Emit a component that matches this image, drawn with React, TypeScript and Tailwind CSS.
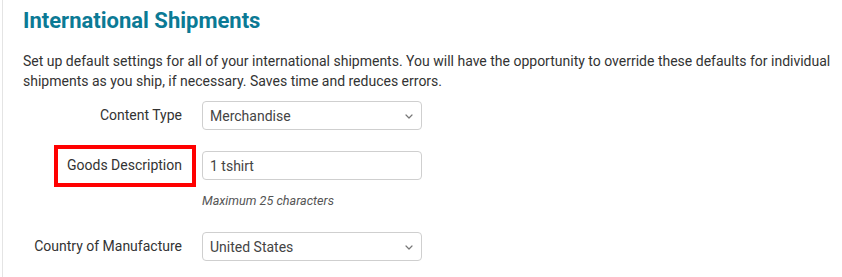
import type { ReactNode } from "react";

function FieldRow({ label, children, highlight }: { label: string; children: ReactNode; highlight?: boolean }) {
  return (
    <div className="flex items-center gap-[20px]">
      <div className="flex w-[159px] shrink-0 justify-end">
        <span className="relative text-[14px] text-[#333]">
          {label}
          {highlight && (
            <span className="pointer-events-none absolute -bottom-[11px] -left-[13px] -right-[14px] -top-[10px] border-[4px] border-[#ff0000]" />
          )}
        </span>
      </div>
      {children}
    </div>
  );
}

function Chevron() {
  return (
    <svg width="8" height="5" viewBox="0 0 8 5" fill="none" className="text-[#777]">
      <path d="M1 1l3 3 3-3" stroke="currentColor" strokeWidth="1.2" strokeLinecap="round" strokeLinejoin="round" />
    </svg>
  );
}

function SelectBox({ value }: { value: string }) {
  return (
    <div className="flex h-[29px] w-[220px] items-center justify-between rounded-[4px] border border-[#cfcfcf] bg-white pl-[7px] pr-[8px] pt-[2px] text-[14px] text-[#444]">
      <span>{value}</span>
      <Chevron />
    </div>
  );
}

export default function App() {
  return (
    <div className="h-[277px] w-[842px] bg-white font-['Roboto',sans-serif]">
      <div className="ml-[2px] h-full border-l border-[#e4e4e4] pl-[20px] pr-[8px]">
        <h2 className="pt-[5px] text-[22px] font-bold leading-[32px] text-[#0b7a95]">International Shipments</h2>
        <p className="mt-[14px] text-[14px] leading-[20px] text-[#333]">
          Set up default settings for all of your international shipments. You will have the opportunity to override
          these defaults for individual shipments as you ship, if necessary. Saves time and reduces errors.
        </p>
        <div className="mt-[10px] flex flex-col">
          <FieldRow label="Content Type">
            <SelectBox value="Merchandise" />
          </FieldRow>
          <div className="mt-[21px]">
            <FieldRow label="Goods Description" highlight>
              <div className="flex h-[29px] w-[220px] items-center rounded-[4px] border border-[#cfcfcf] bg-white px-[7px] pt-[1px] text-[14px] text-[#444]">
                1 tshirt
              </div>
            </FieldRow>
          </div>
          <div className="ml-[179px] mt-[12px] text-[12.6px] italic text-[#555]">Maximum 25 characters</div>
          <div className="mt-[21px]">
            <FieldRow label="Country of Manufacture">
              <SelectBox value="United States" />
            </FieldRow>
          </div>
        </div>
      </div>
    </div>
  );
}
